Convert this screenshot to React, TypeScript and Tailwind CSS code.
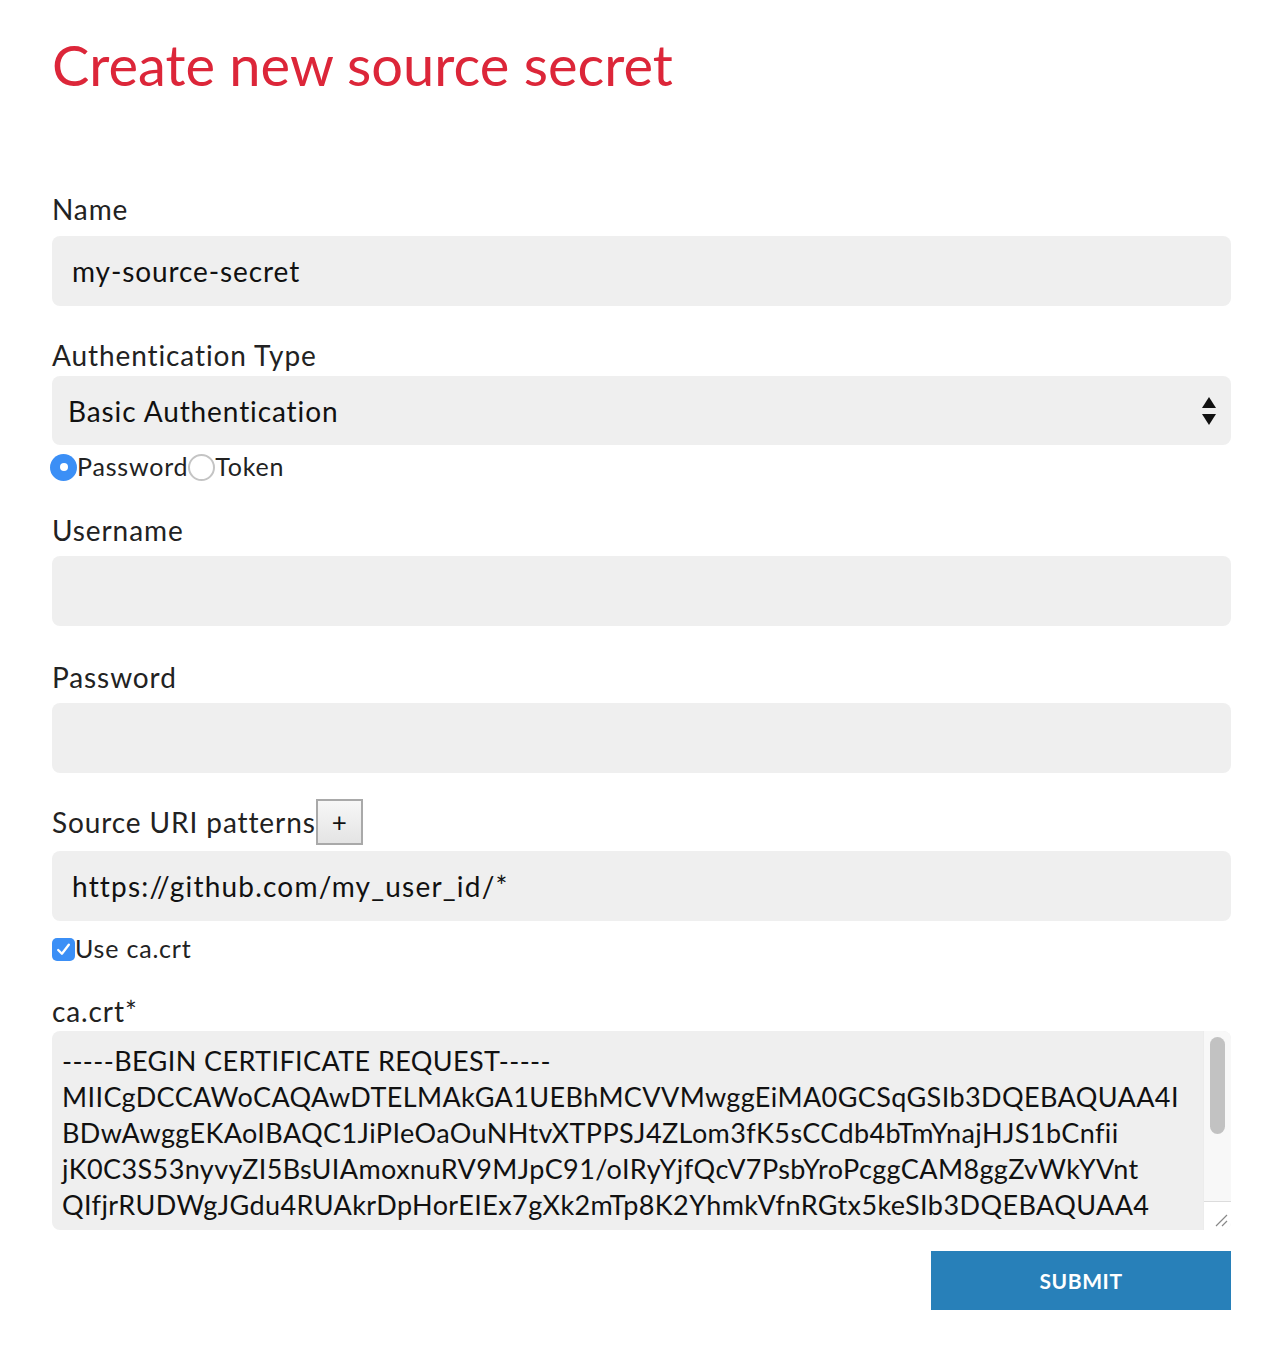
import React from "react"

const certLines = [
  "-----BEGIN CERTIFICATE REQUEST-----",
  "MIICgDCCAWoCAQAwDTELMAkGA1UEBhMCVVMwggEiMA0GCSqGSIb3DQEBAQUAA4I",
  "BDwAwggEKAoIBAQC1JiPIeOaOuNHtvXTPPSJ4ZLom3fK5sCCdb4bTmYnajHJS1bCnfii",
  "jK0C3S53nyvyZI5BsUIAmoxnuRV9MJpC91/oIRyYjfQcV7PsbYroPcggCAM8ggZvWkYVnt",
  "QIfjrRUDWgJGdu4RUAkrDpHorEIEx7gXk2mTp8K2YhmkVfnRGtx5keSIb3DQEBAQUAA4",
  "IBDwAwggEKAoIBAQC1JiPIeOaOuNHtvXTPPSJ4ZLom3fK5sCCdb4bTm",
]

function Label({ children }: { children: React.ReactNode }) {
  return <div className="h-[36px] flex items-center text-[28px] tracking-[0.9px] text-[#222]">{children}</div>
}

function TextInput({ value }: { value?: string }) {
  return (
    <div className="mt-[8px] h-[70px] rounded-lg bg-[#efefef] flex items-center px-[20px] text-[28px] tracking-[0.9px] text-[#111]">
      {value}
    </div>
  )
}

function Radio({ checked, label }: { checked?: boolean; label: string }) {
  return (
    <div className="flex items-center">
      {checked ? (
        <span className="w-[27px] h-[27px] rounded-full bg-[#3b8ff6] flex items-center justify-center">
          <span className="w-[8px] h-[8px] rounded-full bg-white" />
        </span>
      ) : (
        <span className="w-[27px] h-[27px] rounded-full bg-white border-2 border-[#c4c4c4]" />
      )}
      <span className="text-[25px] tracking-[0.8px] text-[#222]">{label}</span>
    </div>
  )
}

export default function App() {
  return (
    <div className="w-[1286px] min-h-[1350px] bg-white" style={{ fontFamily: "Lato, 'Liberation Sans', sans-serif" }}>
      <div className="ml-[52px] w-[1179px] pt-[30px]">
        <h1 className="text-[56px] leading-[70px] text-[#dc2639]">Create new source secret</h1>

        <div className="mt-[91px]">
          <Label>Name</Label>
          <div className="mt-[9px] h-[70px] rounded-lg bg-[#efefef] flex items-center px-[20px] text-[28px] tracking-[0.9px] text-[#111]">
            my-source-secret
          </div>
        </div>

        <div className="mt-[31px]">
          <Label>Authentication Type</Label>
          <div className="mt-[3px] h-[69px] rounded-lg bg-[#efefef] flex items-center justify-between pl-[16px] pr-[14px] text-[28px] tracking-[0.9px] text-[#111]">
            <span>Basic Authentication</span>
            <svg width="16" height="30" viewBox="0 0 16 30">
              <path d="M8 1 L15 12 L1 12 Z" fill="#111" />
              <path d="M1 18 L15 18 L8 29 Z" fill="#111" />
            </svg>
          </div>
          <div className="mt-[4px] h-[36px] flex items-center -ml-[2px]">
            <Radio checked label="Password" />
            <Radio label="Token" />
          </div>
        </div>

        <div className="mt-[27px]">
          <Label>Username</Label>
          <TextInput />
        </div>

        <div className="mt-[33px]">
          <Label>Password</Label>
          <TextInput />
        </div>

        <div className="mt-[26px]">
          <div className="flex items-center h-[45px]">
            <span className="text-[28px] tracking-[0.9px] text-[#222]">Source URI patterns</span>
            <button className="w-[47px] h-[46px] border-2 border-[#a9a9a9] bg-gradient-to-b from-[#f7f7f7] to-[#e4e4e4] text-[26px] text-[#111] flex items-center justify-center leading-none">
              +
            </button>
          </div>
          <div className="mt-[7px] h-[70px] rounded-lg bg-[#efefef] flex items-center px-[20px] text-[28px] tracking-[1.2px] text-[#111]">
            https://github.com/my_user_id/*
          </div>
          <div className="mt-[10px] h-[36px] flex items-center">
            <span className="w-[23px] h-[23px] rounded-[5px] bg-[#3b8ff6] flex items-center justify-center">
              <svg width="17" height="17" viewBox="0 0 16 16">
                <path d="M3 8.5 L6.5 12 L13 3.5" fill="none" stroke="white" strokeWidth="2.2" strokeLinecap="round" strokeLinejoin="round" />
              </svg>
            </span>
            <span className="text-[25px] tracking-[0.8px] text-[#222]">Use ca.crt</span>
          </div>
        </div>

        <div className="mt-[26px]">
          <Label>ca.crt*</Label>
          <div className="mt-[2px] h-[199px] rounded-lg bg-[#efefef] flex overflow-hidden">
            <div className="flex-1 overflow-hidden pl-[10px] pt-[12px] text-[27px] tracking-[0.4px] leading-[36px] text-[#111] whitespace-pre">
              {certLines.join("\n")}
            </div>
            <div className="w-[28px] flex flex-col bg-[#f8f8f8] border-l border-[#ececec]">
              <div className="flex-1 px-[6px] pt-[6px]">
                <div className="h-[97px] rounded-full bg-[#c2c2c2]" />
              </div>
              <div className="h-[29px] border-t border-[#dcdcdc] bg-white flex items-end justify-end p-[3px]">
                <svg width="14" height="14" viewBox="0 0 14 14">
                  <path d="M13 2 L2 13 M13 8 L8 13" stroke="#888" strokeWidth="1.2" />
                </svg>
              </div>
            </div>
          </div>
        </div>

        <div className="mt-[21px] flex justify-end">
          <button className="w-[300px] h-[59px] bg-[#2880b9] text-white text-[21px] font-bold tracking-[0.6px]">
            SUBMIT
          </button>
        </div>
      </div>
    </div>
  )
}
